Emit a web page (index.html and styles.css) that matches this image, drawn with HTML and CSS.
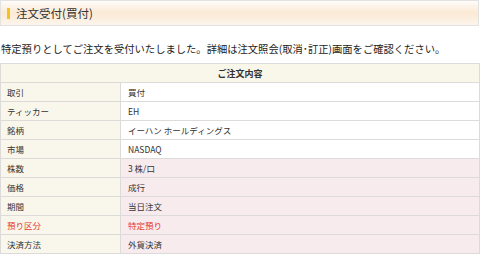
FILE: index.html
```html
<!DOCTYPE html>
<html lang="ja">
<head>
    <meta charset="UTF-8">
    <title>注文受付</title>
    <link rel="stylesheet" href="styles.css">
</head>
<body>

    <div class="page-title">
        <span class="title-mark"></span>
        <h1>注文受付(買付)</h1>
    </div>

    <p class="message">特定預りとしてご注文を受付いたしました。詳細は注文照会(取消･訂正)画面をご確認ください。</p>

    <table class="order-table">
        <tr>
            <th colspan="2" class="table-head">ご注文内容</th>
        </tr>
        <tr>
            <td class="label">取引</td>
            <td class="value">買付</td>
        </tr>
        <tr>
            <td class="label">ティッカー</td>
            <td class="value">EH</td>
        </tr>
        <tr>
            <td class="label">銘柄</td>
            <td class="value">イーハン ホールディングス</td>
        </tr>
        <tr>
            <td class="label">市場</td>
            <td class="value">NASDAQ</td>
        </tr>
        <tr>
            <td class="label">株数</td>
            <td class="value input">3 株/口</td>
        </tr>
        <tr>
            <td class="label">価格</td>
            <td class="value input">成行</td>
        </tr>
        <tr>
            <td class="label">期間</td>
            <td class="value input">当日注文</td>
        </tr>
        <tr class="alert">
            <td class="label">預り区分</td>
            <td class="value input">特定預り</td>
        </tr>
        <tr>
            <td class="label">決済方法</td>
            <td class="value input">外貨決済</td>
        </tr>
    </table>

</body>
</html>
```

FILE: styles.css
```css
* {
    margin: 0;
    padding: 0;
    box-sizing: border-box;
}

body {
    font-family: "Noto Sans CJK JP", "Noto Sans", sans-serif;
    color: #333;
    background: #fff;
    width: 480px;
}

.page-title {
    display: flex;
    align-items: center;
    height: 26px;
    margin-right: 1px;
    border: 1px solid #e2e2e2;
    background: linear-gradient(to bottom, #fefcf9 0%, #fbe9d4 50%, #fdf5ec 100%);
}

.title-mark {
    width: 3px;
    height: 11px;
    margin: 0 6px 0 6px;
    background: #f2c21f;
}

.page-title h1 {
    font-size: 11.5px;
    font-weight: normal;
    color: #333;
}

.message {
    margin: 16px 0 7px 1px;
    font-size: 10.3px;
    line-height: 14px;
    color: #222;
}

.order-table {
    width: 100%;
    border-collapse: collapse;
    font-size: 8.5px;
}

.order-table th,
.order-table td {
    border: 1px solid #dddada;
    height: 19px;
    text-align: left;
    font-weight: normal;
}

.table-head {
    background: #f8f7ea;
    text-align: center !important;
    font-weight: bold !important;
    font-size: 9px;
}

.label {
    width: 120px;
    padding-left: 6px;
    background: #f9f7eb;
    color: #333;
}

.value {
    padding-left: 7px;
    background: #fff;
    color: #333;
}

.value.input {
    background: #f8ebee;
}

.alert td {
    color: #e53a2f;
}
```
